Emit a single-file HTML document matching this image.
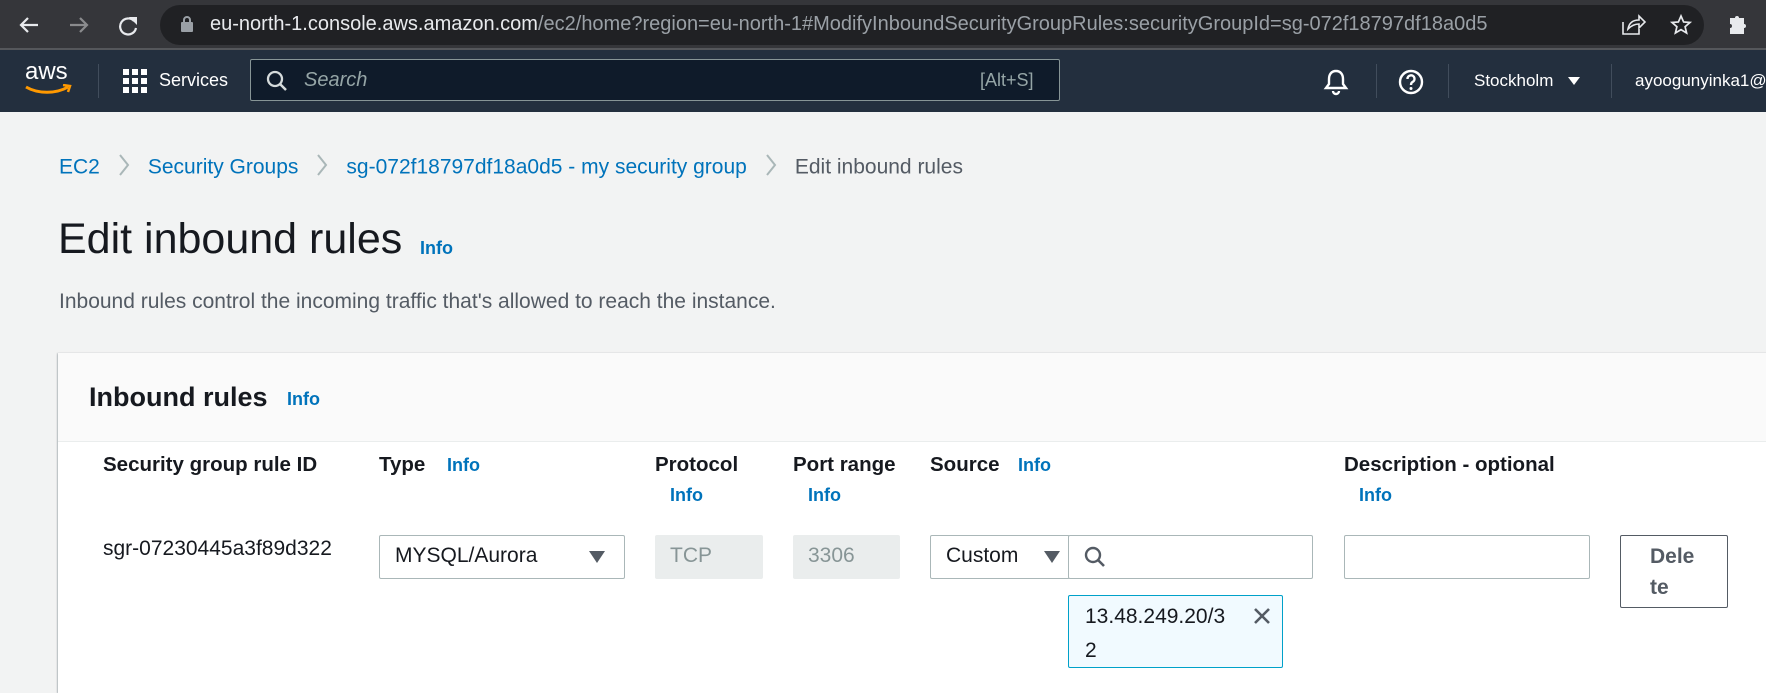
<!DOCTYPE html>
<html><head><meta charset="utf-8"><style>
*{margin:0;padding:0;box-sizing:border-box}
body{width:1766px;height:686px;overflow:hidden;background:#f2f3f3;font-family:"Liberation Sans",sans-serif;color:#16191f;position:relative}
.a{position:absolute;white-space:nowrap}
.info{color:#0073bb;font-weight:bold;font-size:18px}
.hd{font-weight:bold;font-size:20.5px;color:#16191f}
.lnk{color:#0073bb}
.box{position:absolute;border:1px solid #aab7b8;border-radius:2px;background:#fff}
.chev{display:inline-block;width:48px;vertical-align:middle;text-align:center}
</style></head><body>
<!-- chrome bar -->
<div class="a" style="left:0;top:0;width:1766px;height:49px;background:#35363a"></div>
<div class="a" style="left:0;top:48px;width:1766px;height:2px;background:#55575b"></div>
<svg class="a" style="left:16px;top:13px" width="130" height="24" viewBox="0 0 130 24">
<path d="M22 12H6M12 5L5 12l7 7" stroke="#e8eaed" stroke-width="2.2" fill="none"/>
<path d="M54 12h16M64 5l7 7-7 7" stroke="#8a8b8d" stroke-width="2.2" fill="none"/>
<path d="M118 8a8 8 0 1 0 2 7" stroke="#e8eaed" stroke-width="2.2" fill="none"/><path d="M113 4h8v8z" fill="#e8eaed"/>
</svg>
<div class="a" style="left:160px;top:5px;width:1544px;height:40px;border-radius:20px;background:#202124"></div>
<svg class="a" style="left:180px;top:15px" width="14" height="18"><rect x="1" y="7" width="12" height="10" rx="1" fill="#9aa0a6"/><path d="M4 8V5a3 3 0 0 1 6 0v3" stroke="#9aa0a6" stroke-width="2" fill="none"/></svg>
<div class="a" style="left:210px;top:13px;font-size:20px;color:#e8eaed">eu-north-1.console.aws.amazon.com<span style="color:#9aa0a6">/ec2/home?region=eu-north-1#ModifyInboundSecurityGroupRules:securityGroupId=sg-072f18797df18a0d5</span></div>
<svg class="a" style="left:1620px;top:13px" width="130" height="24">
<path d="M3 9v12h16v-5M8 16c1-6 5-9 11-9V3l6 6-6 6v-4c-5 0-8 2-11 5z" stroke="#e8eaed" stroke-width="1.6" fill="none"/>
<path d="M61 3l2.6 6 6.4.5-4.9 4.2 1.5 6.3L61 16.6 55.4 20l1.5-6.3L52 9.5l6.4-.5z" stroke="#e8eaed" stroke-width="1.7" fill="none"/>
<path d="M110 5h5a2 2 0 0 1 4 0h5v6a2 2 0 0 1 0 4v6h-14v-6a2 2 0 0 0 0-4z" fill="#e8eaed"/>
</svg>
<!-- aws nav -->
<div class="a" style="left:0;top:50px;width:1766px;height:62px;background:#232f3e"></div>
<div class="a" style="left:25px;top:58px;font-size:24px;color:#fff">aws</div>
<svg class="a" style="left:24px;top:84px" width="50" height="12"><path d="M2 3c12 7 30 7 42 0" stroke="#ff9900" stroke-width="3" fill="none"/><path d="M39 1l7 1-2 6" stroke="#ff9900" stroke-width="2.5" fill="none"/></svg>
<div class="a" style="left:98px;top:64px;width:1px;height:34px;background:#414d5c"></div>
<svg class="a" style="left:123px;top:69px" width="24" height="24"><g fill="#fff"><rect x="0" y="0" width="6" height="6"/><rect x="9" y="0" width="6" height="6"/><rect x="18" y="0" width="6" height="6"/><rect x="0" y="9" width="6" height="6"/><rect x="9" y="9" width="6" height="6"/><rect x="18" y="9" width="6" height="6"/><rect x="0" y="18" width="6" height="6"/><rect x="9" y="18" width="6" height="6"/><rect x="18" y="18" width="6" height="6"/></g></svg>
<div class="a" style="left:159px;top:70px;font-size:18px;color:#fff">Services</div>
<div class="a" style="left:250px;top:59px;width:810px;height:42px;background:#0f1b2a;border:1px solid #879596;border-radius:2px"></div>
<svg class="a" style="left:266px;top:70px" width="22" height="22"><circle cx="9" cy="9" r="7" stroke="#d5dbdb" stroke-width="2.3" fill="none"/><path d="M14 14l6 6" stroke="#d5dbdb" stroke-width="2.5"/></svg>
<div class="a" style="left:304px;top:69px;font-size:20px;color:#95a5a6;font-style:italic">Search</div>
<div class="a" style="left:980px;top:70px;font-size:18px;color:#95a5a6">[Alt+S]</div>
<svg class="a" style="left:1323px;top:68px" width="26" height="28"><path d="M13 3c-5 0-7 4-7 8v5l-3 4h20l-3-4v-5c0-4-2-8-7-8z" stroke="#fff" stroke-width="2.4" fill="none"/><path d="M10 23a3 3 0 0 0 6 0" stroke="#fff" stroke-width="2.4" fill="none"/></svg>
<div class="a" style="left:1376px;top:64px;width:1px;height:34px;background:#414d5c"></div>
<svg class="a" style="left:1398px;top:69px" width="26" height="26"><circle cx="13" cy="13" r="11" stroke="#fff" stroke-width="2.4" fill="none"/><path d="M9.5 10a3.5 3.5 0 1 1 5 3c-1.3.7-1.5 1.5-1.5 3" stroke="#fff" stroke-width="2.4" fill="none"/><circle cx="13" cy="19.5" r="1.5" fill="#fff"/></svg>
<div class="a" style="left:1448px;top:64px;width:1px;height:34px;background:#414d5c"></div>
<div class="a" style="left:1474px;top:71px;font-size:17px;color:#fff">Stockholm</div>
<svg class="a" style="left:1567px;top:75px" width="14" height="12"><path d="M1 2h12L7 10z" fill="#fff"/></svg>
<div class="a" style="left:1611px;top:64px;width:1px;height:34px;background:#414d5c"></div>
<div class="a" style="left:1635px;top:71px;font-size:17px;color:#fff">ayoogunyinka1@</div>
<!-- breadcrumb -->
<div class="a" style="left:59px;top:154px;font-size:21px;color:#545b64">
<span class="lnk">EC2</span><span class="chev"><svg width="12" height="22"><path d="M2 1l8 10-8 10" stroke="#aab7b8" stroke-width="2" fill="none"/></svg></span><span class="lnk">Security Groups</span><span class="chev"><svg width="12" height="22"><path d="M2 1l8 10-8 10" stroke="#aab7b8" stroke-width="2" fill="none"/></svg></span><span class="lnk">sg-072f18797df18a0d5 - my security group</span><span class="chev"><svg width="12" height="22"><path d="M2 1l8 10-8 10" stroke="#aab7b8" stroke-width="2" fill="none"/></svg></span>Edit inbound rules</div>
<div class="a" style="left:58px;top:215px;font-size:43px;color:#16191f">Edit inbound rules</div>
<div class="a info" style="left:420px;top:238px">Info</div>
<div class="a" style="left:59px;top:290px;font-size:21px;color:#545b64">Inbound rules control the incoming traffic that's allowed to reach the instance.</div>
<!-- panel -->
<div class="a" style="left:58px;top:353px;width:1720px;height:340px;background:#fff;box-shadow:0 1px 2px rgba(0,28,36,.3),-1px 0 1px rgba(0,28,36,.15)"></div>
<div class="a" style="left:58px;top:353px;width:1720px;height:89px;background:#fafafa;border-bottom:1px solid #eaeded"></div>
<div class="a" style="left:89px;top:382px;font-size:27px;font-weight:bold">Inbound rules</div>
<div class="a info" style="left:287px;top:389px">Info</div>
<div class="a hd" style="left:103px;top:453px">Security group rule ID</div>
<div class="a hd" style="left:379px;top:453px">Type</div><div class="a info" style="left:447px;top:455px">Info</div>
<div class="a hd" style="left:655px;top:453px">Protocol</div><div class="a info" style="left:670px;top:485px">Info</div>
<div class="a hd" style="left:793px;top:453px">Port range</div><div class="a info" style="left:808px;top:485px">Info</div>
<div class="a hd" style="left:930px;top:453px">Source</div><div class="a info" style="left:1018px;top:455px">Info</div>
<div class="a hd" style="left:1344px;top:453px">Description - optional</div><div class="a info" style="left:1359px;top:485px">Info</div>
<div class="a" style="left:103px;top:537px;font-size:21px">sgr-07230445a3f89d322</div>
<div class="box" style="left:379px;top:535px;width:246px;height:44px"></div>
<div class="a" style="left:395px;top:544px;font-size:21px">MYSQL/Aurora</div>
<svg class="a" style="left:589px;top:551px" width="16" height="12"><path d="M0 0h16L8 12z" fill="#545b64"/></svg>
<div class="a" style="left:655px;top:535px;width:108px;height:44px;background:#eaeded;border-radius:2px"></div>
<div class="a" style="left:670px;top:544px;font-size:21px;color:#879596">TCP</div>
<div class="a" style="left:793px;top:535px;width:107px;height:44px;background:#eaeded;border-radius:2px"></div>
<div class="a" style="left:808px;top:544px;font-size:21px;color:#879596">3306</div>
<div class="box" style="left:930px;top:535px;width:140px;height:44px"></div>
<div class="a" style="left:946px;top:544px;font-size:21px">Custom</div>
<svg class="a" style="left:1044px;top:551px" width="16" height="12"><path d="M0 0h16L8 12z" fill="#545b64"/></svg>
<div class="box" style="left:1068px;top:535px;width:245px;height:44px"></div>
<svg class="a" style="left:1084px;top:546px" width="24" height="24"><circle cx="9" cy="9" r="7" stroke="#545b64" stroke-width="2.4" fill="none"/><path d="M14 14l6 6" stroke="#545b64" stroke-width="2.6"/></svg>
<div class="box" style="left:1344px;top:535px;width:246px;height:44px"></div>
<div class="a" style="left:1620px;top:535px;width:108px;height:73px;border:1px solid #545b64;border-radius:2px;background:#fff"></div>
<div class="a" style="left:1650px;top:541px;font-size:21px;font-weight:bold;color:#545b64;line-height:31px">Dele<br>te</div>
<div class="a" style="left:1068px;top:595px;width:215px;height:73px;border:1px solid #00a1c9;border-radius:2px;background:#f1faff"></div>
<div class="a" style="left:1085px;top:600px;font-size:21px;line-height:34px">13.48.249.20/3<br>2</div>
<svg class="a" style="left:1253px;top:607px" width="18" height="18"><path d="M2 2l14 14M16 2L2 16" stroke="#545b64" stroke-width="2.6"/></svg>
</body></html>
